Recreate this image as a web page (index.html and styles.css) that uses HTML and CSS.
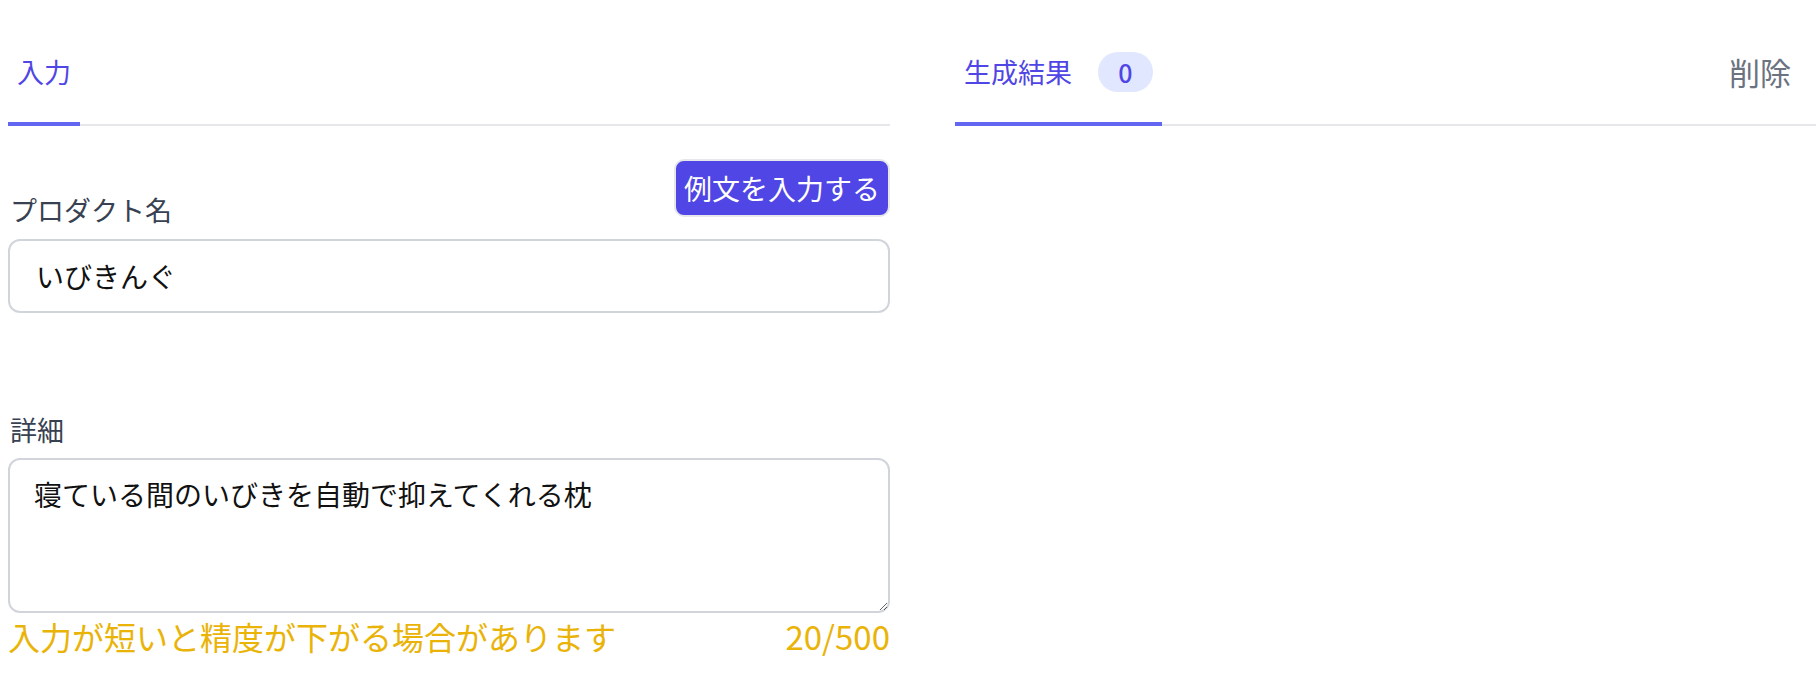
FILE: index.html
```html
<!DOCTYPE html>
<html lang="ja">
<head>
<meta charset="utf-8">
<title>生成</title>
<link rel="stylesheet" href="styles.css">
</head>
<body>
<div class="page">
  <section class="col">
    <div class="tabbar">
      <div class="tab active">入力</div>
    </div>
    <div class="field-head">
      <label class="label" for="name">プロダクト名</label>
      <button class="example-btn" type="button">例文を入力する</button>
    </div>
    <input id="name" class="text-input" type="text" value="いびきんぐ">
    <div class="field-head detail-head">
      <label class="label" for="detail">詳細</label>
    </div>
    <textarea id="detail" class="textarea">寝ている間のいびきを自動で抑えてくれる枕</textarea>
    <div class="helper">
      <span>入力が短いと精度が下がる場合があります</span>
      <span class="counter">20/500</span>
    </div>
  </section>
  <section class="col right">
    <div class="tabbar">
      <div class="tab active">生成結果<span class="badge">0</span></div>
      <div class="spacer"></div>
      <div class="delete">削除</div>
    </div>
  </section>
</div>
</body>
</html>
```

FILE: styles.css
```css
html, body {
  margin: 0;
  padding: 0;
  background: #ffffff;
}
body {
  font-family: "Noto Sans CJK JP", "Noto Sans", sans-serif;
  color: #111827;
}
.page {
  display: grid;
  grid-template-columns: 882px 1fr;
  column-gap: 65px;
  padding-left: 8px;
}
.col {
  display: flex;
  flex-direction: column;
}
.tabbar {
  display: flex;
  align-items: flex-end;
  height: 124px;
  border-bottom: 2px solid #e5e7eb;
}
.tab {
  display: flex;
  align-items: center;
  font-size: 27px;
  line-height: 40px;
  color: #4f46e5;
  padding: 0 9px 30px 9px;
  margin-bottom: -2px;
  border-bottom: 4px solid #6366f1;
}
.badge {
  display: inline-flex;
  align-items: center;
  justify-content: center;
  width: 55px;
  height: 40px;
  margin-left: 26px;
  border-radius: 20px;
  background: #e0e7ff;
  color: #4f46e5;
  font-size: 25px;
  font-weight: 500;
}
.spacer {
  flex: 1;
}
.delete {
  font-size: 31px;
  line-height: 40px;
  color: #6b7280;
  padding: 0 25px 32px 0;
}
.field-head {
  display: flex;
  justify-content: space-between;
  align-items: flex-end;
  margin-top: 33px;
}
.label {
  font-size: 27px;
  line-height: 40px;
  color: #374151;
  padding-left: 2px;
}
.example-btn {
  font-family: inherit;
  font-size: 28px;
  line-height: 40px;
  color: #ffffff;
  background: #4f46e5;
  border: 2px solid #e5e7eb;
  border-radius: 10px;
  padding: 7px 8px;
  margin-bottom: 13px;
  cursor: pointer;
}
.text-input {
  box-sizing: border-box;
  margin-top: 9px;
  width: 100%;
  height: 74px;
  padding: 0 26px;
  font-family: inherit;
  font-size: 28px;
  color: #111111;
  border: 2px solid #d1d5db;
  border-radius: 12px;
  outline: none;
}
.detail-head {
  margin-top: 97px;
}
.textarea {
  box-sizing: border-box;
  margin-top: 8px;
  width: 100%;
  height: 155px;
  padding: 14px 24px;
  font-family: inherit;
  font-size: 28px;
  line-height: 40px;
  color: #111111;
  border: 2px solid #d1d5db;
  border-radius: 12px;
  outline: none;
}
.helper {
  display: flex;
  justify-content: space-between;
  align-items: baseline;
  font-size: 32px;
  line-height: 46px;
  color: #eab308;
  margin-top: 0;
}
.counter {
  font-size: 33px;
}
```
